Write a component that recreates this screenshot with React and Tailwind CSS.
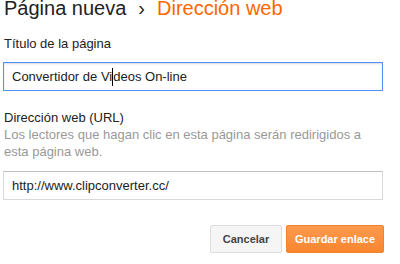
import React from 'react';

export default function App() {
  return (
    <div className="w-[400px] h-[264px] bg-white overflow-hidden text-[#222]" style={{ fontFamily: '"Liberation Sans", Arial, sans-serif' }}>
      <div className="pl-[4px] pr-[17px]">
        <h1 className="flex items-baseline text-[20px] leading-[20px] font-normal mt-[-2px]">
          <span>Página nueva</span>
          <span className="mx-[12px]">›</span>
          <span className="text-[#ff6600]">Dirección web</span>
        </h1>
      </div>

      <div className="pl-[3px] pr-[17px]">
        <label className="block pl-[1px] mt-[17px] text-[13px] leading-[17px]">Título de la página</label>
        <div className="mt-[10px] h-[29px] w-[380px] border border-[#4d90fe] shadow-[inset_0_1px_2px_rgba(0,0,0,0.15)] flex items-center pl-[8px] text-[13px] text-[#222]">
          <span>Convertidor de Vi</span>
          <span className="inline-block w-px h-[18px] bg-black"></span>
          <span>deos On-line</span>
        </div>

        <label className="block pl-[1px] mt-[18px] text-[13px] leading-[17px]">Dirección web (URL)</label>
        <p className="pl-[1px] text-[13px] leading-[17px] text-[#999] w-[370px]">
          Los lectores que hagan clic en esta página serán redirigidos a esta página web.
        </p>
        <div className="mt-[11px] h-[29px] w-[380px] border border-[#d9d9d9] border-t-[#c0c0c0] flex items-center pl-[8px] text-[13px] text-[#222]">
          http://www.clipconverter.cc/
        </div>

        <div className="mt-[25px] flex justify-end gap-[4px] w-[380px]">
          <button className="w-[72px] h-[28px] rounded-[2px] border border-[#dcdcdc] bg-[#f5f5f5] text-[11px] font-bold text-[#444]">
            Cancelar
          </button>
          <button className="w-[98px] h-[28px] rounded-[2px] border border-[#f3822c] bg-gradient-to-b from-[#fd9a4c] to-[#f8862f] text-[11px] font-bold text-white mr-[-1px]">
            Guardar enlace
          </button>
        </div>
      </div>
    </div>
  );
}
